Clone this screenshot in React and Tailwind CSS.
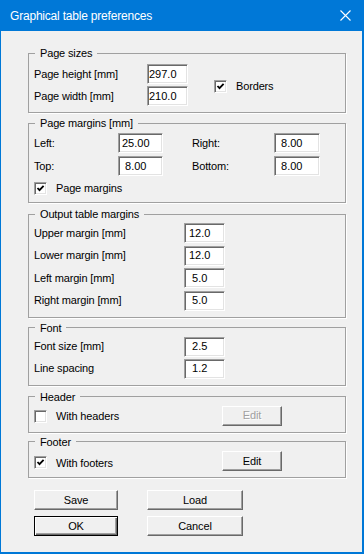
const Field = ({ value, w, pl }) => (
  <div
    className={`h-[20px] ${w} ${pl} flex items-center bg-white border border-t-[#a0a0a0] border-l-[#a0a0a0] border-r-white border-b-white shadow-[inset_1px_1px_0_#696969,inset_-1px_-1px_0_#e3e3e3] whitespace-pre tracking-normal`}
  >
    {value}
  </div>
);

const CheckBox = ({ checked }) => (
  <div className="w-[13px] h-[13px] shrink-0 bg-white border border-t-[#a0a0a0] border-l-[#a0a0a0] border-r-white border-b-white shadow-[inset_1px_1px_0_#696969,inset_-1px_-1px_0_#e3e3e3]">
    {checked && (
      <svg width="11" height="11" viewBox="0 0 11 11" className="block">
        <path d="M2.5 5 L4.5 7.2 L8.6 2.8" fill="none" stroke="#000" strokeWidth="1.8" />
      </svg>
    )}
  </div>
);

const Btn = ({ label, w, primary, disabled }) => (
  <div
    className={`h-[20px] ${w} flex items-center justify-center bg-[#f0f0f0] ${
      primary
        ? 'border border-black shadow-[inset_1px_1px_0_#fff,inset_-1px_-1px_0_#696969,inset_-2px_-2px_0_#a0a0a0]'
        : 'border border-t-white border-l-white border-r-[#696969] border-b-[#696969] shadow-[inset_-1px_-1px_0_#a0a0a0]'
    } ${disabled ? 'text-[#a0a0a0] [text-shadow:1px_1px_0_#fff]' : 'text-black'}`}
  >
    {label}
  </div>
);

const Group = ({ title, className, children }) => (
  <fieldset className={`w-[318px] border border-[#a0a0a0] shadow-[1px_1px_0_#fff] ${className}`}>
    <legend className="ml-[6px] px-[5px] leading-[14px]">{title}</legend>
    <div className="px-[5px]">{children}</div>
  </fieldset>
);

const Row = ({ label, value, lw, pl, gap }) => (
  <div className={`flex items-center ${gap}`}>
    <div className={lw}>{label}</div>
    <Field value={value} w="w-[41px]" pl={pl} />
  </div>
);

export default function App() {
  return (
    <div
      className="w-[364px] h-[554px] flex flex-col bg-[#f0f0f0] border-l border-r-2 border-b-2 border-[#0078d7] text-[11px] tracking-[-0.15px] text-black"
      style={{ fontFamily: '"Liberation Sans", Arial, sans-serif' }}
    >
      <div className="h-[31px] shrink-0 bg-[#0078d7] flex items-center justify-between pl-[9px] pr-[11px] text-white text-[12px] tracking-[-0.2px]">
        <span>Graphical table preferences</span>
        <svg width="11" height="11" viewBox="0 0 11 11">
          <path d="M0.5 0.5 L10.5 10.5 M10.5 0.5 L0.5 10.5" stroke="#fff" strokeWidth="1.1" />
        </svg>
      </div>

      <div className="pl-[27px] pt-[15px] flex flex-col">
        <Group title="Page sizes">
          <div className="pt-[4px] pb-[6px] flex items-center">
            <div className="flex flex-col gap-[2px]">
              <Row label="Page height [mm]" value="297.0" lw="w-[113px]" pl="pl-[1px]" />
              <Row label="Page width [mm]" value="210.0" lw="w-[113px]" pl="pl-[1px]" />
            </div>
            <div className="flex items-center ml-[26px] mt-[3px]">
              <CheckBox checked />
              <span className="ml-[9px]">Borders</span>
            </div>
          </div>
        </Group>

        <Group title="Page margins [mm]" className="mt-[3px]">
          <div className="pt-[3px] pb-[7px] flex flex-col">
            <div className="flex flex-col gap-[3px]">
              <div className="flex items-center">
                <div className="w-[84px]">Left:</div>
                <Field value="25.00" w="w-[45px]" pl="pl-[3px]" />
                <div className="w-[82px] ml-[29px]">Right:</div>
                <Field value=" 8.00" w="w-[46px]" pl="pl-[3px]" />
              </div>
              <div className="flex items-center">
                <div className="w-[84px]">Top:</div>
                <Field value=" 8.00" w="w-[45px]" pl="pl-[3px]" />
                <div className="w-[82px] ml-[29px]">Bottom:</div>
                <Field value=" 8.00" w="w-[46px]" pl="pl-[3px]" />
              </div>
            </div>
            <div className="flex items-center mt-[6px] h-[13px]">
              <CheckBox checked />
              <span className="ml-[9px]">Page margins</span>
            </div>
          </div>
        </Group>

        <Group title="Output table margins" className="mt-[4px]">
          <div className="pt-[2px] pb-[6px] flex flex-col gap-[2.5px]">
            <Row label="Upper margin [mm]" value="12.0" lw="w-[150px]" pl="pl-[4px]" />
            <Row label="Lower margin [mm]" value="12.0" lw="w-[150px]" pl="pl-[4px]" />
            <Row label="Left margin [mm]" value=" 5.0" lw="w-[150px]" pl="pl-[4px]" />
            <Row label="Right margin [mm]" value=" 5.0" lw="w-[150px]" pl="pl-[4px]" />
          </div>
        </Group>

        <Group title="Font" className="mt-[3px]">
          <div className="pt-[2px] pb-[6px] flex flex-col gap-[2px]">
            <Row label="Font size [mm]" value=" 2.5" lw="w-[150px]" pl="pl-[4px]" />
            <Row label="Line spacing" value=" 1.2" lw="w-[150px]" pl="pl-[4px]" />
          </div>
        </Group>

        <Group title="Header" className="mt-[4px]">
          <div className="pt-[2px] pb-[6px] flex items-center">
            <div className="w-[188px] flex items-center mt-[2px]">
              <CheckBox />
              <span className="ml-[9px]">With headers</span>
            </div>
            <Btn label="Edit" w="w-[60px]" disabled />
          </div>
        </Group>

        <Group title="Footer" className="mt-[2px]">
          <div className="pt-[2px] pb-[6px] flex items-center">
            <div className="w-[188px] flex items-center mt-[4px]">
              <CheckBox checked />
              <span className="ml-[9px]">With footers</span>
            </div>
            <Btn label="Edit" w="w-[60px]" />
          </div>
        </Group>

        <div className="mt-[12px] ml-[6px] flex flex-col gap-[6px]">
          <div className="flex gap-[29px]">
            <Btn label="Save" w="w-[84px]" />
            <Btn label="Load" w="w-[96px]" />
          </div>
          <div className="flex gap-[29px]">
            <Btn label="OK" w="w-[84px]" primary />
            <Btn label="Cancel" w="w-[96px]" />
          </div>
        </div>
      </div>
    </div>
  );
}
